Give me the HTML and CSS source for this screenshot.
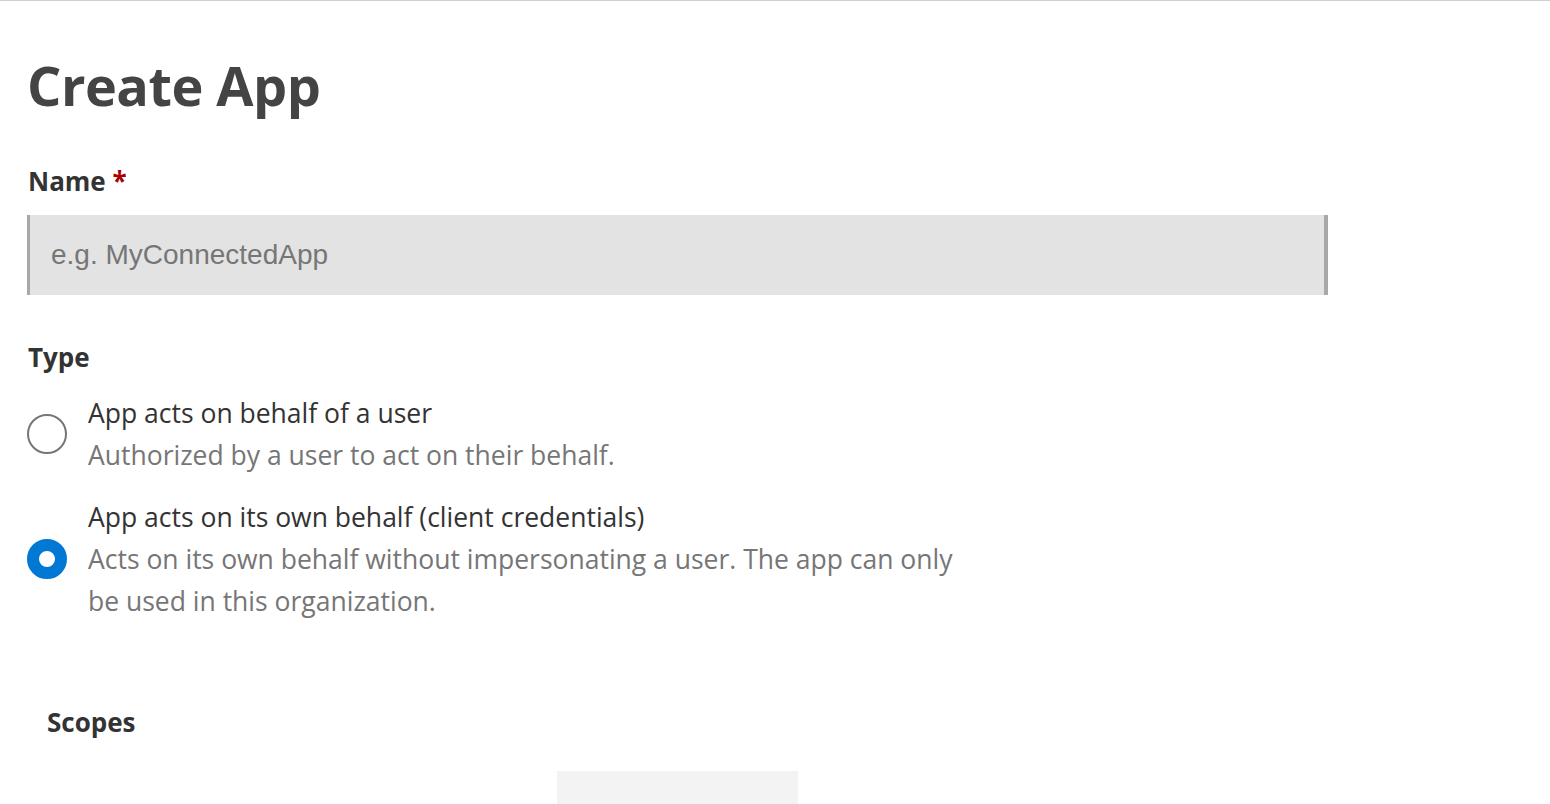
FILE: index.html
```html
<!DOCTYPE html>
<html lang="en">
<head>
<meta charset="utf-8">
<title>Create App</title>
<link rel="stylesheet" href="styles.css">
</head>
<body>
<div class="page">
  <h1 class="title">Create App</h1>

  <div class="field">
    <label class="label" for="name">Name <span class="req">*</span></label>
    <input id="name" class="text-input" type="text" placeholder="e.g. MyConnectedApp">
  </div>

  <div class="field type-field">
    <div class="label">Type</div>
    <div class="options">
      <div class="option">
        <span class="radio"></span>
        <div class="option-text">
          <div class="option-title">App acts on behalf of a user</div>
          <div class="option-desc">Authorized by a user to act on their behalf.</div>
        </div>
      </div>
      <div class="option">
        <span class="radio checked"></span>
        <div class="option-text">
          <div class="option-title">App acts on its own behalf (client credentials)</div>
          <div class="option-desc">Acts on its own behalf without impersonating a user. The app can only be used in this organization.</div>
        </div>
      </div>
    </div>
  </div>

  <div class="scopes">
    <div class="scopes-label">Scopes</div>
    <div class="scopes-box"></div>
  </div>
</div>
</body>
</html>
```
FILE: styles.css
```css
* { box-sizing: border-box; }
html, body { margin: 0; padding: 0; background: #fff; overflow: hidden; }
body {
  font-family: "Open Sans", "Noto Sans", sans-serif;
  color: #333;
  border-top: 1px solid #d0d0d0;
  height: 804px;
}
.page {
  padding: 0 0 0 27px;
}
.title {
  margin: 0;
  padding-top: 48px;
  font-size: 54px;
  line-height: 72px;
  font-weight: 700;
  color: #444;
  letter-spacing: -0.5px;
}
.field { margin-top: 44px; }
.label {
  display: block;
  font-size: 26px;
  font-weight: 700;
  color: #333;
  line-height: 32px;
  padding-left: 1px;
}
.req { color: #a80000; }
.text-input {
  display: block;
  margin-top: 18px;
  width: 1301px;
  height: 80px;
  border: none;
  border-left: 3px solid #a8a8a8;
  border-right: 4px solid #a8a8a8;
  background: #e3e3e3;
  padding: 0 0 0 21px;
  font-family: "Liberation Sans", Arial, sans-serif;
  font-size: 28px;
  color: #333;
  outline: none;
}
.text-input::placeholder { color: #767676; }
.type-field { margin-top: 46px; }
.options { margin-top: 19px; display: flex; flex-direction: column; gap: 20px; }
.option { display: flex; align-items: center; gap: 21px; }
.radio {
  flex: none;
  width: 40px; height: 40px;
  margin-top: -1px;
  border-radius: 50%;
  border: 2px solid #767676;
  background: #fff;
}
.radio.checked {
  border: 12px solid #0078d4;
  background: #fff;
}
.option-text { max-width: 880px; font-size: 26.5px; line-height: 42px; }
.option-title { color: #333; }
.option-desc { color: #767676; }
.scopes { margin-top: 85px; padding-left: 20px; }
.scopes-label { font-size: 26px; font-weight: 700; color: #333; line-height: 30px; }
.scopes-box {
  margin-top: 34px;
  margin-left: 510px;
  width: 241px;
  height: 40px;
  background: #f3f3f3;
}
```
